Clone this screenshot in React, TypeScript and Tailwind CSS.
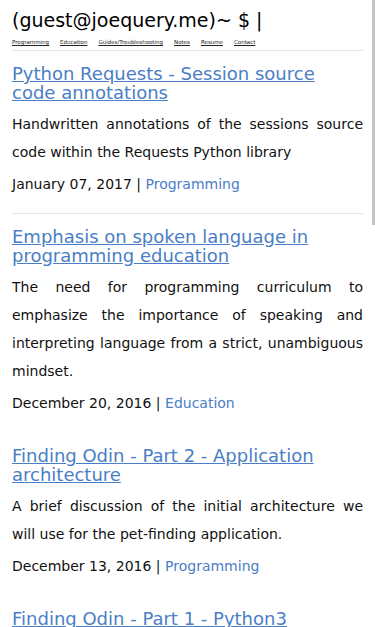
import React from "react";

const posts = [
  {
    title: "Python Requests - Session source code annotations",
    desc: "Handwritten annotations of the sessions source code within the Requests Python library",
    date: "January 07, 2017",
    cat: "Programming",
    hr: true,
  },
  {
    title: "Emphasis on spoken language in programming education",
    desc: "The need for programming curriculum to emphasize the importance of speaking and interpreting language from a strict, unambiguous mindset.",
    date: "December 20, 2016",
    cat: "Education",
    hr: false,
  },
  {
    title: "Finding Odin - Part 2 - Application architecture",
    desc: "A brief discussion of the initial architecture we will use for the pet-finding application.",
    date: "December 13, 2016",
    cat: "Programming",
    hr: false,
  },
  {
    title: "Finding Odin - Part 1 - Python3",
    desc: "Getting started with the pet-finding application.",
    date: "December 06, 2016",
    cat: "Programming",
    hr: false,
  },
];

const nav = ["Programming", "Education", "Guides/Troubleshooting", "Notes", "Resume", "Contact"];

export default function App() {
  return (
    <div
      className="relative h-[627px] w-[375px] overflow-hidden bg-white text-[#111]"
      style={{ fontFamily: '"DejaVu Sans", Verdana, sans-serif' }}
    >
      <div className="px-3">
        <h1 className="pt-[8px] text-[19px] leading-[24px] text-black">(guest@joequery.me)~ $ |</h1>
        <nav className="mt-[6px] flex gap-[11px] text-[5.5px] leading-[8px]">
          {nav.map((n) => (
            <a key={n} href="#" className="text-[#222] underline">
              {n}
            </a>
          ))}
        </nav>
        <hr className="mt-[4px] border-0 border-t border-[#e6e6e6]" />
        {posts.map((p) => (
          <div key={p.title} className="pt-[13px]">
            <h2 className="text-[18px] leading-[19px]">
              <a href="#" className="text-[#4a7ec6] underline">
                {p.title}
              </a>
            </h2>
            <p className="mt-[8px] text-justify text-[14px] leading-[28px] text-[#111]">{p.desc}</p>
            <p className="mt-[4px] text-[14px] leading-[28px] text-[#111]">
              {p.date} | <a href="#" className="text-[#4a7ec6]">{p.cat}</a>
            </p>
            <hr className={"mt-[15px] border-0 border-t " + (p.hr ? "border-[#e6e6e6]" : "border-transparent")} />
          </div>
        ))}
      </div>
      <div className="absolute right-0 top-0 h-[225px] w-[3px] bg-[#c4c4c4]" />
    </div>
  );
}
